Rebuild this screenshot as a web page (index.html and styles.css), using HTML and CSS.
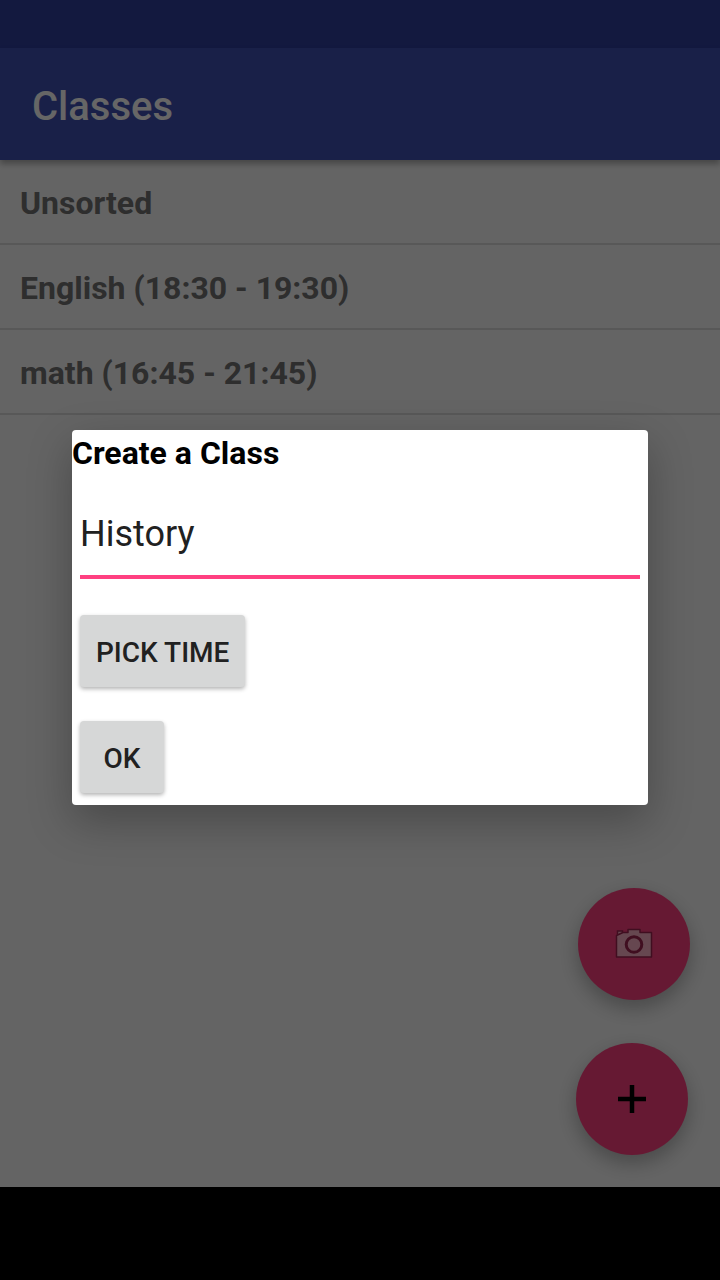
FILE: index.html
```html
<!DOCTYPE html>
<html lang="en">
<head>
<meta charset="utf-8">
<meta name="viewport" content="width=device-width, initial-scale=1">
<title>Classes</title>
<link rel="stylesheet" href="styles.css">
</head>
<body>
<div class="screen">
  <div class="status-bar"></div>
  <div class="app">
    <header class="toolbar"><h1 class="toolbar-title">Classes</h1></header>
    <main class="content">
      <ul class="class-list">
        <li class="class-item">Unsorted</li>
        <li class="class-item">English (18:30 - 19:30)</li>
        <li class="class-item">math (16:45 - 21:45)</li>
      </ul>
    </main>
    <button class="fab fab-camera" type="button" aria-label="Take photo">
      <svg width="40" height="32" viewBox="0 0 40 32" aria-hidden="true">
        <path d="M3.500 6.500V3H8.500V4.500" fill="#ffb2c8" stroke="#a02450" stroke-width="1.500"/>
        <path d="M2.500 7.500L9 4.500H14V1.500H26V4.500H37.500V29H2.500Z" fill="#ffb2c8" stroke="#a02450" stroke-width="1.500" stroke-linejoin="round"/>
        <circle cx="20" cy="16.500" r="7.800" fill="none" stroke="#a02450" stroke-width="3"/>
      </svg>
    </button>
    <button class="fab fab-add" type="button" aria-label="Add class">
      <svg width="32" height="32" viewBox="0 0 32 32" aria-hidden="true">
        <path d="M2 16H30M16 2V30" stroke="#000" stroke-width="4.500"/>
      </svg>
    </button>
    <div class="dialog-layer">
      <form class="dialog" role="dialog" aria-labelledby="dialog-title">
        <h2 class="dialog-title" id="dialog-title">Create a Class</h2>
        <input class="name-field" type="text" value="History" aria-labelledby="dialog-title">
        <button class="button" type="button">PICK TIME</button>
        <button class="button" type="button">OK</button>
      </form>
    </div>
  </div>
  <div class="nav-bar"></div>
  <div class="scrim"></div>
</div>
</body>
</html>
```
FILE: styles.css
```css
* {
  box-sizing: border-box;
}

body {
  margin: 0;
  font-family: Roboto, "Liberation Sans", sans-serif;
}

.screen {
  position: relative;
  display: flex;
  flex-direction: column;
  min-height: 100vh;
  background: #fafafa;
}

.status-bar {
  height: 48px;
  background: #303f9f;
}

.app {
  position: relative;
  flex: 1;
}

.toolbar {
  display: flex;
  align-items: center;
  height: 112px;
  padding: 6px 32px 0;
  background: #3f51b5;
  box-shadow: 0 4px 6px rgba(0, 0, 0, 0.3);
}

.toolbar-title {
  margin: 0;
  font-size: 40px;
  line-height: 48px;
  font-weight: 500;
  color: #fff;
}

.class-list {
  margin: 0;
  padding: 0;
  list-style: none;
}

.class-item {
  padding: 23px 20px 20px;
  border-bottom: 2px solid #dcdcdc;
  font-size: 32px;
  line-height: 40px;
  font-weight: 700;
  color: #737373;
}

.fab {
  position: absolute;
  display: flex;
  align-items: center;
  justify-content: center;
  width: 112px;
  height: 112px;
  padding: 0;
  border: 0;
  border-radius: 50%;
  background: #ff4081;
  box-shadow: 0 8px 20px rgba(0, 0, 0, 0.28);
}

.fab-camera {
  right: 30px;
  bottom: 187px;
}

.fab-add {
  right: 32px;
  bottom: 32px;
}

.nav-bar {
  height: 93px;
  background: #000;
}

.scrim {
  position: absolute;
  inset: 0;
  z-index: 1;
  background: rgba(0, 0, 0, 0.6);
}

.dialog-layer {
  position: absolute;
  inset: 0;
  z-index: 2;
  display: flex;
  align-items: center;
  justify-content: center;
}

.dialog {
  display: flex;
  flex-direction: column;
  align-items: flex-start;
  width: 80%;
  padding-bottom: 12px;
  border-radius: 4px;
  background: #fff;
  box-shadow: 0 16px 44px rgba(0, 0, 0, 0.28);
}

.dialog-title {
  margin: 0;
  padding: 3px 0;
  font-size: 32px;
  line-height: 40px;
  font-weight: 700;
  color: #000;
}

.name-field {
  align-self: stretch;
  height: 103px;
  margin: 0 8px 36px;
  padding: 20px 0 4px;
  border: 0;
  border-bottom: 4px solid #ff4081;
  outline: 0;
  background: transparent;
  font: 400 36px/44px Roboto, "Liberation Sans", sans-serif;
  color: #212121;
}

.button {
  min-width: 84px;
  height: 72px;
  margin-left: 8px;
  padding: 4px 16px 0;
  border: 0;
  border-radius: 4px;
  background: #d6d7d7;
  box-shadow: 0 2px 4px rgba(0, 0, 0, 0.3);
  font: 500 28px/32px Roboto, "Liberation Sans", sans-serif;
  color: #212121;
}

.button + .button {
  margin-top: 34px;
}
```
